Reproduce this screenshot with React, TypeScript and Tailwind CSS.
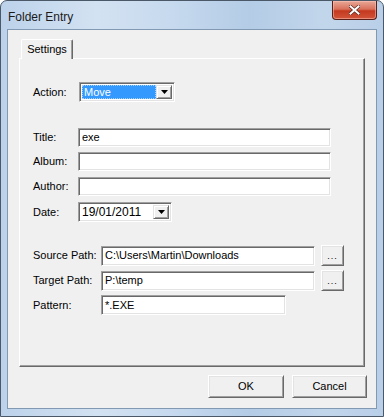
import React from "react";

const font = { fontFamily: '"Liberation Sans", Arial, sans-serif' };

function Sunken({ w, h, children }: { w: string; h: string; children?: React.ReactNode }) {
  return (
    <div
      className={`${w} ${h} bg-white border border-t-[#a0a0a0] border-l-[#a0a0a0] border-b-white border-r-white shadow-[inset_1px_1px_0_#696969,inset_-1px_-1px_0_#e3e3e3] flex items-center pl-[3px] text-[11px] text-black leading-none overflow-hidden`}
    >
      {children}
    </div>
  );
}

function Arrow() {
  return (
    <div className="w-[16px] h-full bg-[#f0f0f0] border border-t-[#e3e3e3] border-l-[#e3e3e3] border-b-[#696969] border-r-[#696969] shadow-[inset_1px_1px_0_#ffffff,inset_-1px_-1px_0_#a0a0a0] flex items-center justify-center">
      <svg width="7" height="4" viewBox="0 0 7 4">
        <path d="M0 0H7L3.5 4Z" fill="#000" />
      </svg>
    </div>
  );
}

function Raised({ className, children }: { className: string; children: React.ReactNode }) {
  return (
    <div
      className={`${className} bg-[#f0f0f0] border border-t-white border-l-white border-b-[#696969] border-r-[#696969] shadow-[inset_1px_1px_0_#e3e3e3,inset_-1px_-1px_0_#a0a0a0] flex items-center justify-center text-[11px] text-black leading-none`}
    >
      {children}
    </div>
  );
}

export default function App() {
  return (
    <div style={font} className="w-[384px] h-[417px] bg-white">
      <div className="w-[384px] h-[417px] border border-[#4a5868] rounded-t-[7px] overflow-hidden bg-[linear-gradient(90deg,#bcd2ea_0%,#d3e2f2_25%,#c6d9ee_45%,#b4cce6_65%,#c2d6eb_85%,#b9cfe8_100%)] flex flex-col">
        {/* Title bar */}
        <div className="h-[28px] flex items-start justify-between">
          <div className="pl-[7px] pt-[7px] text-[12px] text-[#1b1b1b]">Folder Entry</div>
          <div className="mr-[6px] w-[45px] h-[19px] rounded-b-[4px] border border-t-0 border-[#5a2018] bg-[linear-gradient(180deg,#e8a897_0%,#d9715c_45%,#c4391f_55%,#d2553a_100%)] flex items-center justify-center shadow-[inset_0_0_0_1px_rgba(255,200,190,0.5)]">
            <svg width="11" height="10" viewBox="0 0 11 10">
              <path d="M1.5 1.5L9.5 8.5M9.5 1.5L1.5 8.5" stroke="#5a2a20" strokeWidth="3.4" strokeLinecap="square" />
              <path d="M1.5 1.5L9.5 8.5M9.5 1.5L1.5 8.5" stroke="#ffffff" strokeWidth="2" strokeLinecap="square" />
            </svg>
          </div>
        </div>

        {/* Client area */}
        <div className="ml-[6px] w-[370px] h-[380px] border border-[#8299b4] bg-[#f0f0f0] flex flex-col">
          {/* Tabs */}
          <div className="ml-[11px] mt-[9px] flex flex-col">
            <div className="relative z-10 -mb-px ml-[2px] w-[52px] h-[20px] bg-[#f0f0f0] border border-b-0 border-t-white border-l-white border-r-[#696969] shadow-[inset_-1px_0_0_#a0a0a0] rounded-t-[2px] flex items-center justify-center text-[11px] text-black leading-none">
              Settings
            </div>
            <div className="w-[346px] h-[309px] border border-t-white border-l-white border-b-[#696969] border-r-[#696969] shadow-[inset_-1px_-1px_0_#a0a0a0] pl-[13px] flex flex-col text-[11px] text-black">
              {/* Action */}
              <div className="mt-[23px] flex items-center h-[20px]">
                <div className="w-[46px]">Action:</div>
                <div className="w-[96px] h-[20px] bg-white border border-t-[#a0a0a0] border-l-[#a0a0a0] border-b-white border-r-white shadow-[inset_1px_1px_0_#696969,inset_-1px_-1px_0_#e3e3e3] flex p-[2px]">
                  <div className="flex-1 bg-[#3399ff] text-white flex items-center pl-[1px] text-[11px] leading-none border border-dotted border-[#a8d0ff]">
                    Move
                  </div>
                  <Arrow />
                </div>
              </div>

              {/* Title */}
              <div className="mt-[26px] flex items-center">
                <div className="w-[45px]">Title:</div>
                <Sunken w="w-[253px]" h="h-[19px]">exe</Sunken>
              </div>
              <div className="mt-[5px] flex items-center">
                <div className="w-[45px]">Album:</div>
                <Sunken w="w-[253px]" h="h-[19px]" />
              </div>
              <div className="mt-[6px] flex items-center">
                <div className="w-[45px]">Author:</div>
                <Sunken w="w-[253px]" h="h-[19px]" />
              </div>
              <div className="mt-[6px] flex items-center">
                <div className="w-[45px]">Date:</div>
                <div className="w-[94px] h-[20px] bg-white border border-t-[#a0a0a0] border-l-[#a0a0a0] border-b-white border-r-white shadow-[inset_1px_1px_0_#696969,inset_-1px_-1px_0_#e3e3e3] flex p-[2px]">
                  <div className="flex-1 flex items-center pl-[1px] text-[12px] leading-none">19/01/2011</div>
                  <Arrow />
                </div>
              </div>

              {/* Paths */}
              <div className="mt-[23px] flex items-center">
                <div className="w-[68px]">Source Path:</div>
                <Sunken w="w-[214px]" h="h-[20px]">C:\Users\Martin\Downloads</Sunken>
                <Raised className="ml-[6px] w-[23px] h-[21px]">
                  <span className="text-[9px] tracking-[1px] pt-[2px]">...</span>
                </Raised>
              </div>
              <div className="mt-[4px] flex items-center">
                <div className="w-[68px]">Target Path:</div>
                <Sunken w="w-[214px]" h="h-[20px]">P:\temp</Sunken>
                <Raised className="ml-[6px] w-[23px] h-[21px]">
                  <span className="text-[9px] tracking-[1px] pt-[2px]">...</span>
                </Raised>
              </div>
              <div className="mt-[4px] flex items-center">
                <div className="w-[68px]">Pattern:</div>
                <Sunken w="w-[185px]" h="h-[20px]">*.EXE</Sunken>
              </div>
            </div>
          </div>

          {/* Buttons */}
          <div className="mt-[8px] pr-[9px] flex justify-end gap-[8px]">
            <Raised className="w-[76px] h-[23px]">OK</Raised>
            <Raised className="w-[75px] h-[23px]">Cancel</Raised>
          </div>
        </div>
      </div>
    </div>
  );
}
